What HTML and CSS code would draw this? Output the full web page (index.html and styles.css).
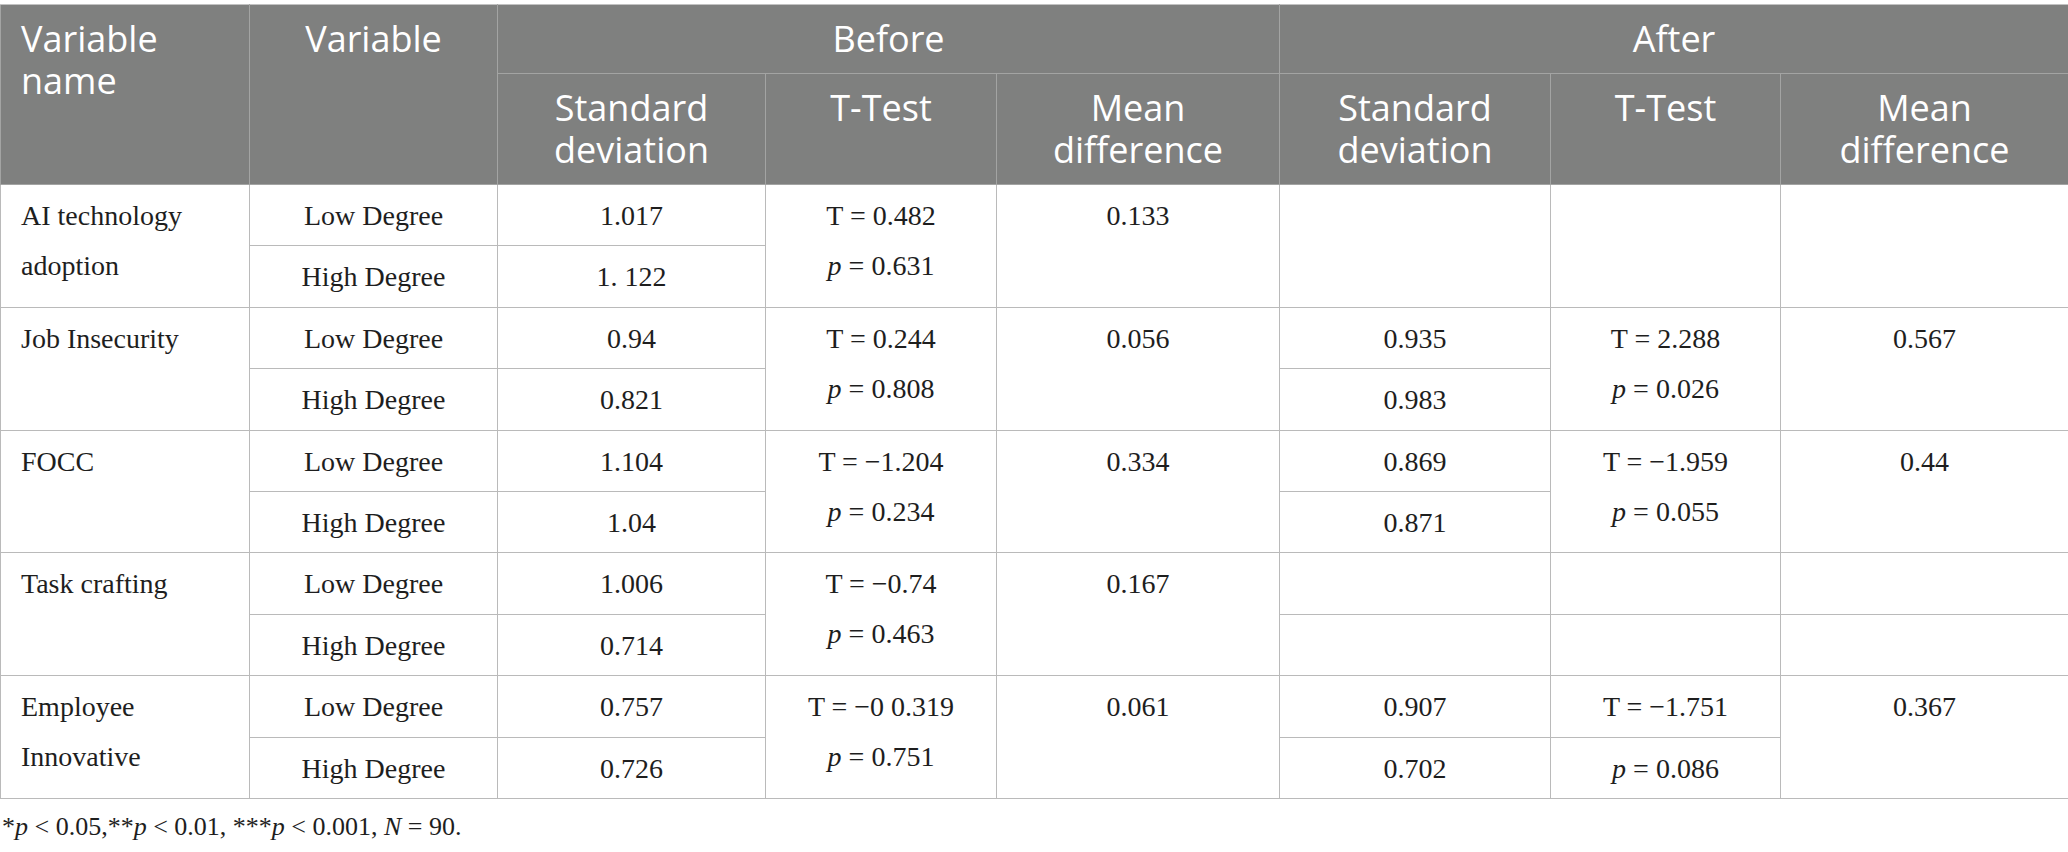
FILE: index.html
```html
<!DOCTYPE html>
<html lang="en">
<head>
<meta charset="utf-8">
<title>Table</title>
<link rel="stylesheet" href="styles.css">
</head>
<body>
<div class="wrap">
<table class="data">
  <colgroup>
    <col class="c1"><col class="c2"><col class="c3"><col class="c4"><col class="c5"><col class="c6"><col class="c7"><col class="c8">
  </colgroup>
  <thead>
    <tr class="h1">
      <th rowspan="2" class="left">Variable<br>name</th>
      <th rowspan="2">Variable</th>
      <th colspan="3">Before</th>
      <th colspan="3">After</th>
    </tr>
    <tr class="h2">
      <th>Standard<br>deviation</th>
      <th>T-Test</th>
      <th>Mean<br>difference</th>
      <th>Standard<br>deviation</th>
      <th>T-Test</th>
      <th>Mean<br>difference</th>
    </tr>
  </thead>
  <tbody>
    <tr>
      <td rowspan="2" class="left">AI technology adoption</td>
      <td>Low Degree</td>
      <td>1.017</td>
      <td rowspan="2">T = 0.482<br><i>p</i> = 0.631</td>
      <td rowspan="2">0.133</td>
      <td rowspan="2"></td>
      <td rowspan="2"></td>
      <td rowspan="2"></td>
    </tr>
    <tr>
      <td>High Degree</td>
      <td>1. 122</td>
    </tr>
    <tr>
      <td rowspan="2" class="left">Job Insecurity</td>
      <td>Low Degree</td>
      <td>0.94</td>
      <td rowspan="2">T = 0.244<br><i>p</i> = 0.808</td>
      <td rowspan="2">0.056</td>
      <td>0.935</td>
      <td rowspan="2">T = 2.288<br><i>p</i> = 0.026</td>
      <td rowspan="2">0.567</td>
    </tr>
    <tr>
      <td>High Degree</td>
      <td>0.821</td>
      <td>0.983</td>
    </tr>
    <tr>
      <td rowspan="2" class="left">FOCC</td>
      <td>Low Degree</td>
      <td>1.104</td>
      <td rowspan="2">T = &minus;1.204<br><i>p</i> = 0.234</td>
      <td rowspan="2">0.334</td>
      <td>0.869</td>
      <td rowspan="2">T = &minus;1.959<br><i>p</i> = 0.055</td>
      <td rowspan="2">0.44</td>
    </tr>
    <tr>
      <td>High Degree</td>
      <td>1.04</td>
      <td>0.871</td>
    </tr>
    <tr>
      <td rowspan="2" class="left">Task crafting</td>
      <td>Low Degree</td>
      <td>1.006</td>
      <td rowspan="2">T = &minus;0.74<br><i>p</i> = 0.463</td>
      <td rowspan="2">0.167</td>
      <td></td>
      <td></td>
      <td></td>
    </tr>
    <tr>
      <td>High Degree</td>
      <td>0.714</td>
      <td></td>
      <td></td>
      <td></td>
    </tr>
    <tr>
      <td rowspan="2" class="left">Employee Innovative</td>
      <td>Low Degree</td>
      <td>0.757</td>
      <td rowspan="2">T = &minus;0 0.319<br><i>p</i> = 0.751</td>
      <td rowspan="2">0.061</td>
      <td>0.907</td>
      <td>T = &minus;1.751</td>
      <td rowspan="2">0.367</td>
    </tr>
    <tr>
      <td>High Degree</td>
      <td>0.726</td>
      <td>0.702</td>
      <td><i>p</i> = 0.086</td>
    </tr>
  </tbody>
</table>
<p class="note">*<i>p</i> &lt; 0.05,**<i>p</i> &lt; 0.01, ***<i>p</i> &lt; 0.001, <i>N</i> = 90.</p>
</div>
</body>
</html>
```

FILE: styles.css
```css
html, body {
  margin: 0;
  padding: 0;
  background: #ffffff;
}

.wrap {
  padding-top: 4px;
}

.data {
  width: 2068px;
  border-collapse: collapse;
  table-layout: fixed;
  font-family: "Liberation Serif", "Times New Roman", serif;
  color: #1e1e1e;
}

.c1 { width: 249px; }
.c2 { width: 248px; }
.c3 { width: 268px; }
.c4 { width: 231px; }
.c5 { width: 283px; }
.c6 { width: 271px; }
.c7 { width: 230px; }
.c8 { width: 288px; }

.data th {
  background: #7f807f;
  color: #ffffff;
  font-family: "Open Sans", "Noto Sans", sans-serif;
  font-weight: 400;
  font-size: 36px;
  line-height: 42px;
  text-align: center;
  vertical-align: top;
  padding: 13px 10px 13px;
  border: 1px solid #a3a4a3;
}

.data thead tr.h1 th {
  border-top-color: #c2c2c2;
}

.data th.left,
.data td.left {
  text-align: left;
  padding-left: 20px;
}

.data tbody tr {
  height: 61.4px;
}

.data td {
  font-size: 28px;
  line-height: 50px;
  text-align: center;
  vertical-align: top;
  padding: 6px 10px 0;
  border: 1px solid #bababa;
}

.data i {
  font-style: italic;
}

.note {
  margin: 12px 0 0 2px;
  font-family: "Liberation Serif", "Times New Roman", serif;
  font-size: 26px;
  line-height: 32px;
  color: #1e1e1e;
}
```
